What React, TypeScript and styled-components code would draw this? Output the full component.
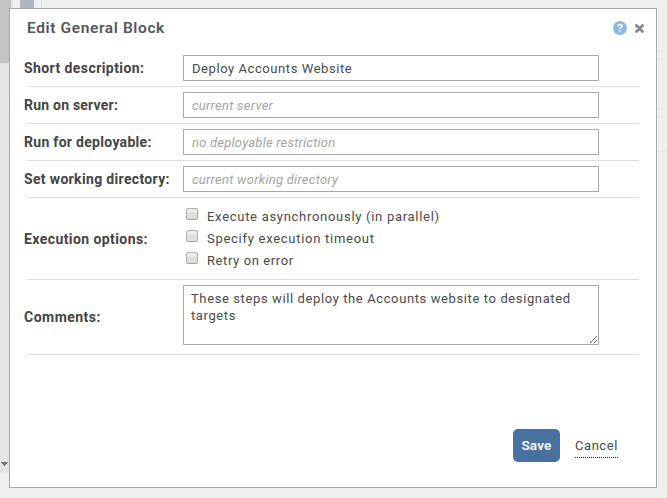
import React from "react";
import styled, { createGlobalStyle } from "styled-components";

const Global = createGlobalStyle`
  * { box-sizing: border-box; }
  html, body { margin: 0; padding: 0; overflow: hidden; background: #efefef; }
  body { font-family: Roboto, "Liberation Sans", sans-serif; font-size: 13px; color: #4a4a4a; }
`;

const Screen = styled.div`
  position: relative;
  width: 667px;
  height: 498px;
  padding: 8px 10px 10px 9px;
  background: #efefef;
  overflow: hidden;
`;

const Backdrop = styled.div`
  position: absolute;
  inset: 0;
  display: flex;
  justify-content: space-between;
`;

const BackLeft = styled.div`
  display: flex;
`;

const Scroller = styled.div`
  width: 13px;
  height: 473px;
  background: #e5e5e5;
  display: flex;
  flex-direction: column;
  justify-content: space-between;
`;

const Thumb = styled.div`
  width: 11px;
  height: 63px;
  background: #c3c3c3;
`;

const ArrowIcon = styled.svg`
  display: block;
  width: 7px;
  height: 4px;
  margin: 0 0 7px 1px;
`;

const BackTab = styled.div`
  width: 14px;
  height: 20px;
  margin-left: 7px;
  background: #b0b5c0;
`;

const BackEdge = styled.div`
  width: 1px;
  height: 20px;
  margin-left: 7px;
  background: #e2e2e2;
`;

const BackRight = styled.div`
  width: 10px;
  padding-top: 50px;
`;

const BackRow = styled.div<{ $h: number }>`
  height: ${(p) => p.$h}px;
  border-top: 1px solid #e4e4e4;
`;

const Dialog = styled.section`
  position: relative;
  width: 648px;
  height: 480px;
  display: flex;
  flex-direction: column;
  background: #fff;
  border: 1px solid #a8a8a8;
`;

const Header = styled.header`
  height: 41px;
  padding: 0 12px 3px 17px;
  display: flex;
  align-items: center;
  justify-content: space-between;
`;

const Title = styled.h1`
  margin: 0;
  font-size: 15.5px;
  font-weight: 600;
  line-height: 20px;
  letter-spacing: 0.62px;
  color: #55565a;
`;

const Tools = styled.div`
  display: flex;
  align-items: center;
  gap: 8px;
  svg { display: block; }
`;

const Form = styled.div`
  margin: 0 17px;
`;

const Row = styled.div<{ $h: number }>`
  height: ${(p) => p.$h}px;
  display: flex;
  padding-top: 5px;
  border-bottom: 1px solid #dcdcdc;
`;

const Label = styled.label<{ $ls: number; $top: number }>`
  width: 159px;
  margin-left: -3px;
  padding-top: ${(p) => p.$top}px;
  font-size: 14px;
  font-weight: 700;
  line-height: 16px;
  white-space: nowrap;
  letter-spacing: ${(p) => p.$ls}px;
  color: #444;
`;

const Input = styled.input<{ $ls: number }>`
  width: 416px;
  height: 26px;
  padding: 1px 8px 0;
  border: 1px solid #a9a9a9;
  border-radius: 0;
  background: #fff;
  font: 13px Roboto, "Liberation Sans", sans-serif;
  letter-spacing: ${(p) => p.$ls}px;
  color: #4a4a4a;
  outline: none;
  &::placeholder { color: #a3a3a3; font-style: italic; opacity: 1; }
`;

const Options = styled.div`
  padding: 2px 0 0 3px;
`;

const Option = styled.label<{ $ls: number }>`
  height: 22px;
  display: flex;
  align-items: flex-start;
  line-height: 24px;
  letter-spacing: ${(p) => p.$ls}px;
  white-space: nowrap;
`;

const Check = styled.input`
  appearance: none;
  width: 12px;
  height: 12px;
  margin: 3px 9px 0 0;
  border: 1px solid #adafb3;
  border-bottom-color: #a2a2a2;
  border-radius: 2.5px;
  background: linear-gradient(#ededed 0, #ededed 30%, #dcdcdc 40%, #dedede 100%);
`;

const CommentBox = styled.div`
  position: relative;
  width: 416px;
  height: 60px;
`;

const Comment = styled.textarea`
  display: block;
  width: 416px;
  height: 60px;
  padding: 4px 7px;
  border: 1px solid #a9a9a9;
  border-radius: 0;
  resize: none;
  overflow: hidden;
  outline: none;
  font: 13px/17px Roboto, "Liberation Sans", sans-serif;
  letter-spacing: 0.61px;
  color: #4a4a4a;
`;

const Grip = styled.svg`
  position: absolute;
  right: 2px;
  bottom: 2px;
  width: 7px;
  height: 7px;
`;

const Footer = styled.footer`
  margin: auto 38px 25px 0;
  display: flex;
  justify-content: flex-end;
  align-items: center;
  gap: 15px;
`;

const Save = styled.button`
  width: 47px;
  height: 33px;
  padding: 0;
  border: 0;
  border-radius: 5px;
  background: #49719f;
  color: #fff;
  font: 600 13.5px/33px Roboto, "Liberation Sans", sans-serif;
  letter-spacing: 0.2px;
`;

const Cancel = styled.a`
  width: 43px;
  height: 21px;
  margin-top: 3px;
  line-height: 17px;
  letter-spacing: 0.55px;
  white-space: nowrap;
  border-bottom: 1px dotted #222;
`;

const fields = [
  { label: "Short description:", ls: 0.42, value: "Deploy Accounts Website", vls: 0.57 },
  { label: "Run on server:", ls: 0.22, hint: "current server", vls: 0.26 },
  { label: "Run for deployable:", ls: 0.3, hint: "no deployable restriction", vls: 0.22 },
  { label: "Set working directory:", ls: 0.34, hint: "current working directory", vls: 0.26 },
];

const options = [
  { text: "Execute asynchronously (in parallel)", ls: 0.71 },
  { text: "Specify execution timeout", ls: 0.72 },
  { text: "Retry on error", ls: 0.6 },
];

export default function App() {
  return (
    <Screen>
      <Global />
      <Backdrop>
        <BackLeft>
          <Scroller>
            <Thumb />
            <ArrowIcon viewBox="0 0 7 4"><path d="M0 0h7v1H6v1H5v1H4v1H3V3H2V2H1V1H0z" fill="#777" /></ArrowIcon>
          </Scroller>
          <BackTab />
          <BackEdge />
        </BackLeft>
        <BackRight>
          {[8, 51, 8, 34, 1].map((h, i) => <BackRow key={i} $h={h} />)}
        </BackRight>
      </Backdrop>
      <Dialog>
        <Header>
          <Title>Edit General Block</Title>
          <Tools>
            <svg width="14" height="14" viewBox="0 0 14 14">
              <circle cx="7" cy="7" r="7" fill="#8bb9e5" />
              <path d="M5 5.2V4.8Q5 3.5 7 3.5T9 5Q9 6 7.9 6.6Q7 7.1 7 8.1" fill="none" stroke="#fff" strokeWidth="1.5" />
              <rect x="6.2" y="9.2" width="1.6" height="1.6" fill="#fff" />
            </svg>
            <svg width="9" height="9" viewBox="0 0 9 9">
              <path d="M1.5 1.5l6 6M7.5 1.5L1.5 7.5" stroke="#858985" strokeWidth="2.8" strokeLinecap="round" />
            </svg>
          </Tools>
        </Header>
        <Form>
          {fields.map((f) => (
            <Row key={f.label} $h={37}>
              <Label $ls={f.ls} $top={5}>{f.label}</Label>
              <Input $ls={f.vls} defaultValue={f.value} placeholder={f.hint} />
            </Row>
          ))}
          <Row $h={82}>
            <Label $ls={0.42} $top={28}>Execution options:</Label>
            <Options>
              {options.map((o) => (
                <Option key={o.text} $ls={o.ls}><Check type="checkbox" />{o.text}</Option>
              ))}
            </Options>
          </Row>
          <Row $h={75}>
            <Label $ls={0.48} $top={24}>Comments:</Label>
            <CommentBox>
              <Comment defaultValue="These steps will deploy the Accounts website to designated targets" />
              <Grip viewBox="0 0 7 7"><path d="M0 7L7 0M4 7l3-3" stroke="#555" strokeWidth="0.9" /></Grip>
            </CommentBox>
          </Row>
        </Form>
        <Footer>
          <Save>Save</Save>
          <Cancel>Cancel</Cancel>
        </Footer>
      </Dialog>
    </Screen>
  );
}
